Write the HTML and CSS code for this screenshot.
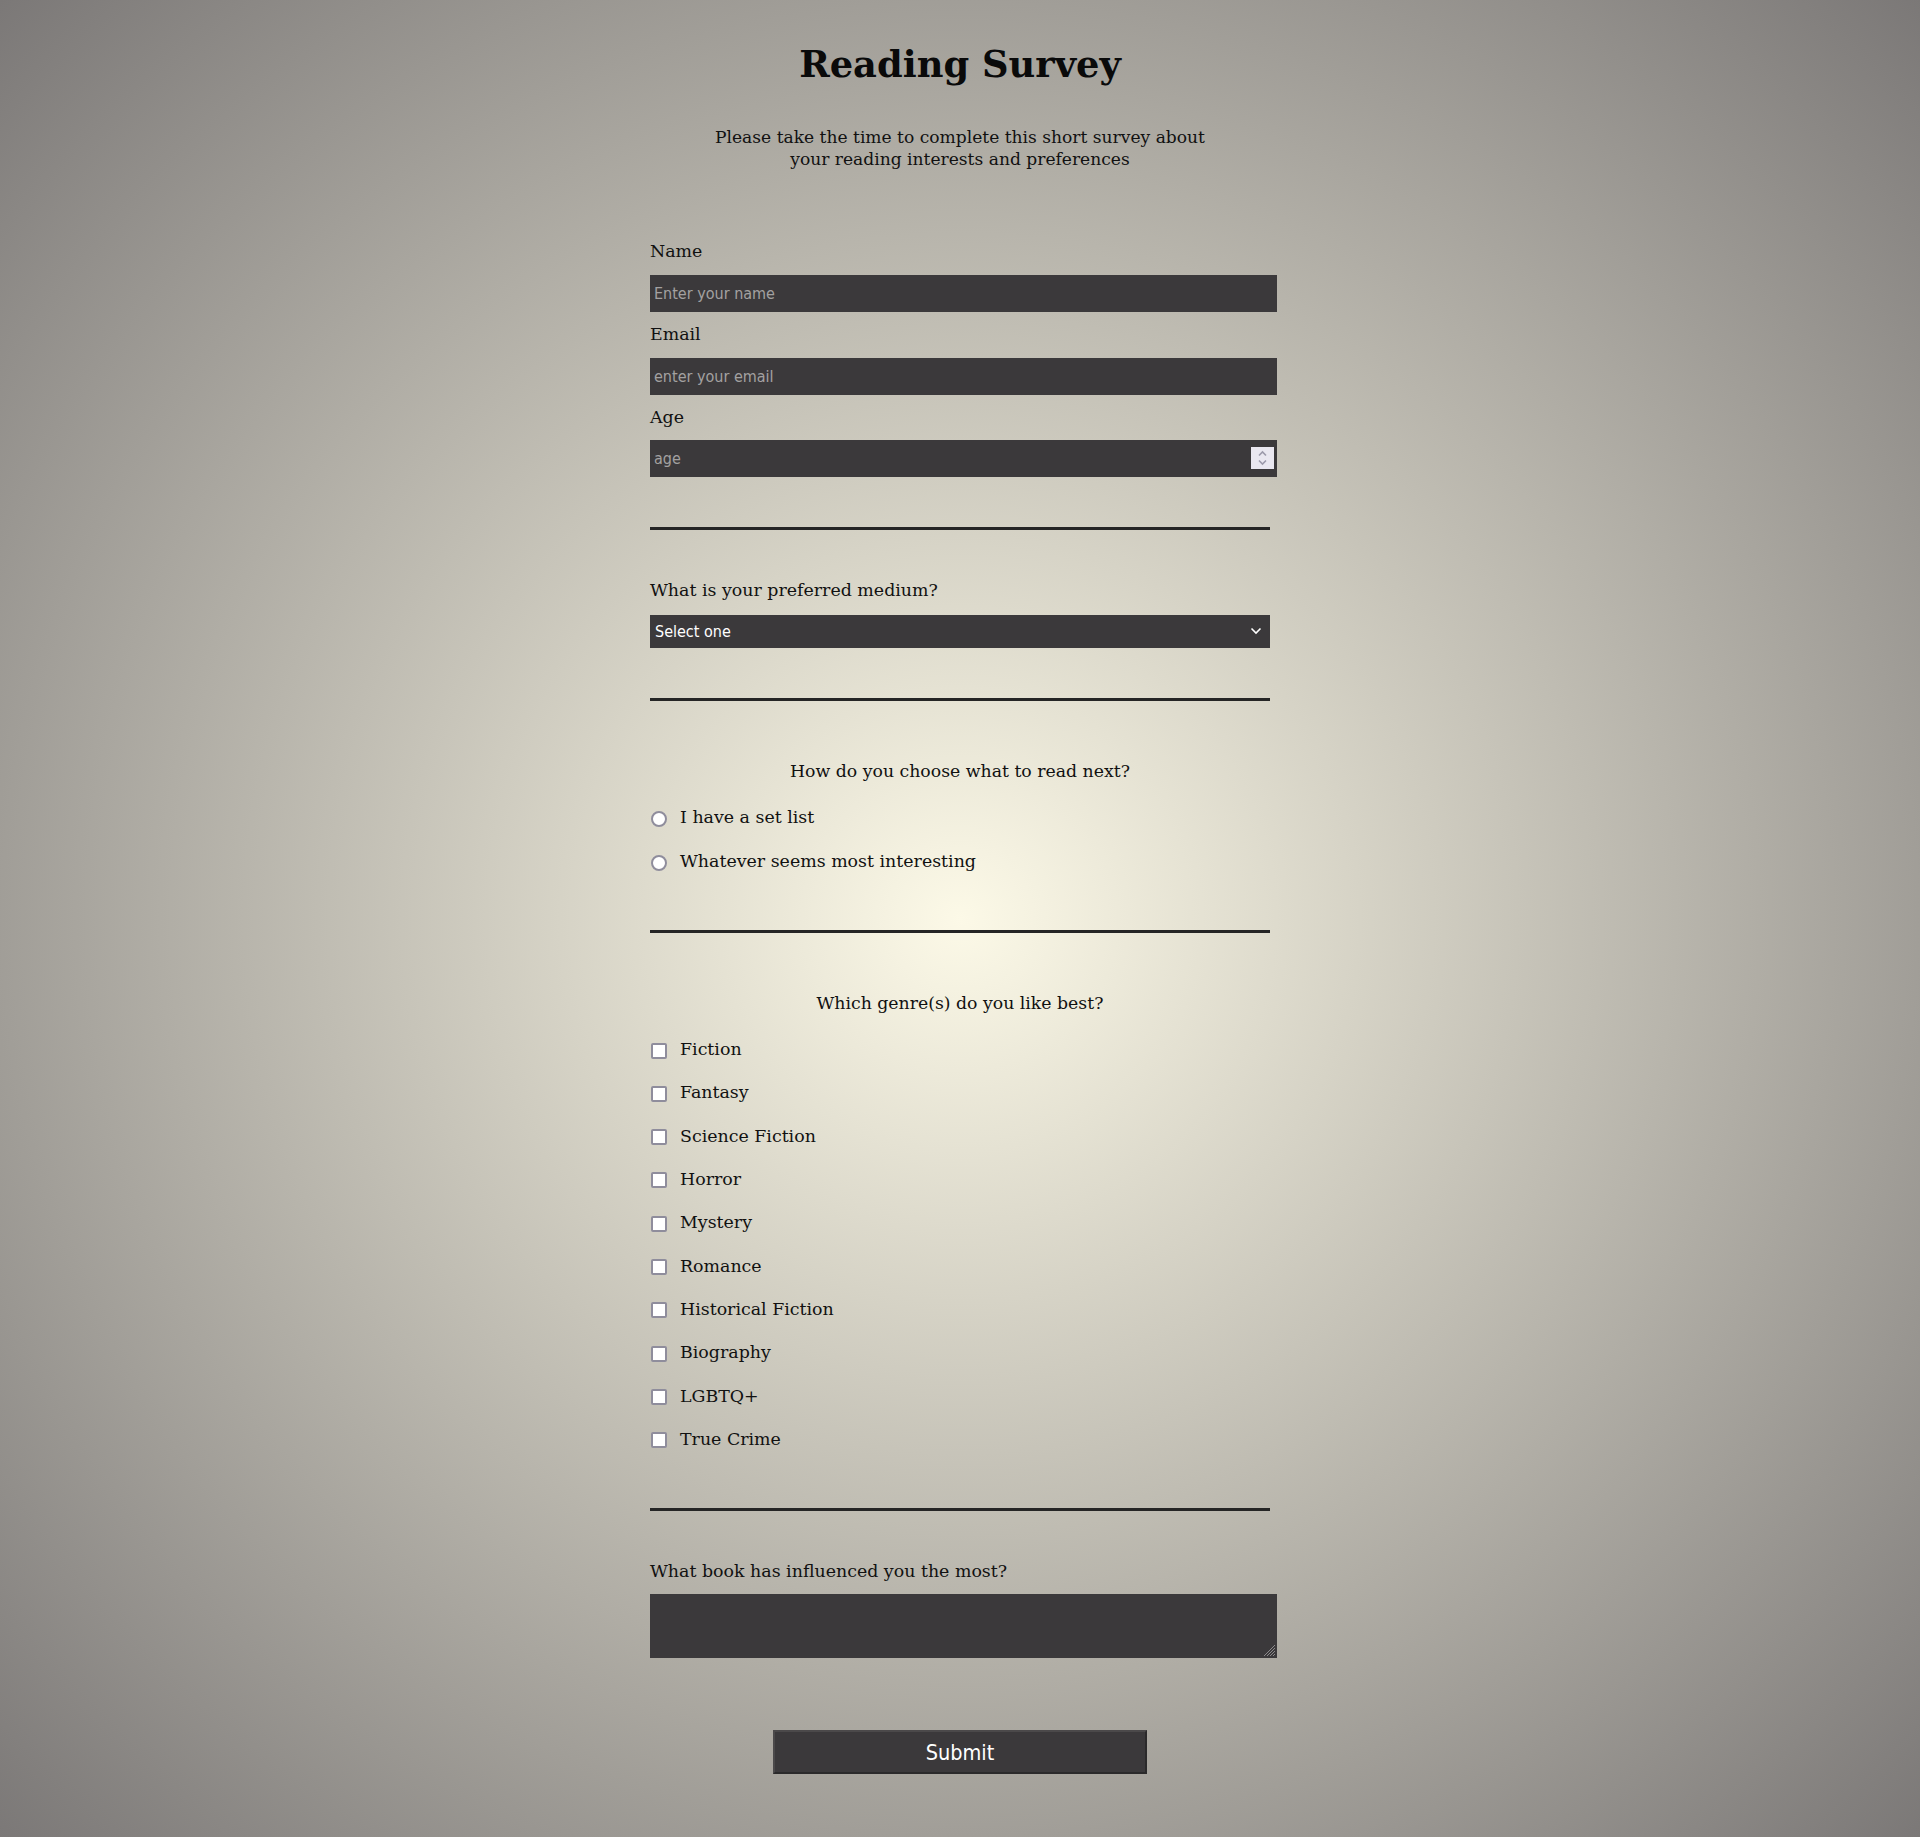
FILE: index.html
```html
<!DOCTYPE html>
<html lang="en">
<head>
<meta charset="utf-8">
<title>Reading Survey</title>
<link rel="stylesheet" href="styles.css">
</head>
<body>
<main class="page">
  <header class="intro">
    <h1 class="title">Reading Survey</h1>
    <p class="subtitle">Please take the time to complete this short survey about<br>your reading interests and preferences</p>
  </header>
  <form class="survey">
    <section class="group group-info">
      <label class="field-label" for="name">Name</label>
      <input class="text-input" id="name" type="text" placeholder="Enter your name">
      <label class="field-label" for="email">Email</label>
      <input class="text-input" id="email" type="email" placeholder="enter your email">
      <label class="field-label" for="age">Age</label>
      <div class="number-wrap">
        <input class="text-input number-input" id="age" type="number" placeholder="age">
        <span class="spinner" aria-hidden="true">
          <svg width="23" height="22" viewBox="0 0 23 22"><path d="M8 8.5 L11.5 5 L15 8.5" fill="none" stroke="#9c9aab" stroke-width="1.6"/><path d="M8 13.5 L11.5 17 L15 13.5" fill="none" stroke="#9c9aab" stroke-width="1.6"/></svg>
        </span>
      </div>
    </section>
    <hr class="divider divider-first">
    <section class="group group-medium">
      <label class="field-label" for="medium">What is your preferred medium?</label>
      <div class="select-wrap">
        <select class="select" id="medium">
          <option>Select one</option>
          <option>Print</option>
          <option>E-book</option>
          <option>Audiobook</option>
        </select>
        <span class="select-arrow" aria-hidden="true">
          <svg width="12" height="8" viewBox="0 0 12 8"><path d="M1.5 1.5 L6 6 L10.5 1.5" fill="none" stroke="#ffffff" stroke-width="1.6"/></svg>
        </span>
      </div>
    </section>
    <hr class="divider">
    <section class="group group-choice">
      <p class="question">How do you choose what to read next?</p>
      <ul class="options options-radio">
        <li class="option"><input class="radio" type="radio" name="choose" id="c1"><label for="c1">I have a set list</label></li>
        <li class="option"><input class="radio" type="radio" name="choose" id="c2"><label for="c2">Whatever seems most interesting</label></li>
      </ul>
    </section>
    <hr class="divider divider-long">
    <section class="group group-choice">
      <p class="question">Which genre(s) do you like best?</p>
      <ul class="options options-check">
        <li class="option"><input class="check" type="checkbox" id="g1"><label for="g1">Fiction</label></li>
        <li class="option"><input class="check" type="checkbox" id="g2"><label for="g2">Fantasy</label></li>
        <li class="option"><input class="check" type="checkbox" id="g3"><label for="g3">Science Fiction</label></li>
        <li class="option"><input class="check" type="checkbox" id="g4"><label for="g4">Horror</label></li>
        <li class="option"><input class="check" type="checkbox" id="g5"><label for="g5">Mystery</label></li>
        <li class="option"><input class="check" type="checkbox" id="g6"><label for="g6">Romance</label></li>
        <li class="option"><input class="check" type="checkbox" id="g7"><label for="g7">Historical Fiction</label></li>
        <li class="option"><input class="check" type="checkbox" id="g8"><label for="g8">Biography</label></li>
        <li class="option"><input class="check" type="checkbox" id="g9"><label for="g9">LGBTQ+</label></li>
        <li class="option"><input class="check" type="checkbox" id="g10"><label for="g10">True Crime</label></li>
      </ul>
    </section>
    <hr class="divider divider-long">
    <section class="group group-book">
      <label class="field-label" for="book">What book has influenced you the most?</label>
      <div class="textarea-wrap">
        <textarea class="textarea" id="book"></textarea>
        <span class="grip" aria-hidden="true">
          <svg width="14" height="14" viewBox="0 0 14 14"><path d="M13 2 L2 13 M13 5 L5 13 M13 8 L8 13 M13 11 L11 13" fill="none" stroke="#8c8a8c" stroke-width="1"/></svg>
        </span>
      </div>
    </section>
    <div class="submit-row">
      <button class="submit" type="submit">Submit</button>
    </div>
  </form>
</main>
</body>
</html>
```
FILE: styles.css
```css
html, body {
  margin: 0;
  padding: 0;
}
body {
  min-height: 1837px;
  background: radial-gradient(ellipse farthest-corner at 50% 50%, #fcf9e7 0%, #7b7877 100%);
  font-family: "DejaVu Serif", "Liberation Serif", serif;
  color: #111;
}
.page {
  width: 620px;
  margin: 0 auto;
  padding-top: 44px;
  padding-bottom: 64px;
}
.intro {
  text-align: center;
}
.title {
  margin: 0;
  font-size: 36.8px;
  line-height: 40px;
  font-weight: bold;
  color: #0a0a0a;
}
.subtitle {
  margin: 42px 0 0;
  font-size: 17.1px;
  line-height: 22px;
}
.survey {
  display: flex;
  flex-direction: column;
  margin-top: 69px;
}
.group {
  display: flex;
  flex-direction: column;
}
.field-label {
  display: block;
  font-size: 17.4px;
  line-height: 24px;
  margin: 0 0 12px;
}
.group-info .field-label + .text-input {
  margin-bottom: 10px;
}
.group-info .number-wrap {
  margin-bottom: 10px;
  margin-top: -1px;
}
.text-input {
  box-sizing: border-box;
  width: 627px;
  height: 37px;
  margin: 0;
  padding: 0 4px;
  border: none;
  background: #3b393b;
  color: #f2f2f2;
  font-family: "DejaVu Sans", "Liberation Sans", sans-serif;
  font-stretch: condensed;
  font-size: 16px;
  outline: none;
}
.text-input::placeholder {
  color: #a3a1a1;
}
.number-wrap {
  position: relative;
  width: 627px;
}
.number-input {
  display: block;
  -moz-appearance: textfield;
}
.number-input::-webkit-inner-spin-button,
.number-input::-webkit-outer-spin-button {
  -webkit-appearance: none;
  margin: 0;
}
.spinner {
  position: absolute;
  right: 3px;
  top: 7px;
  width: 23px;
  height: 22px;
  background: #e9e7f0;
  display: flex;
}
.divider {
  width: 620px;
  margin: 0;
  height: 3px;
  border: none;
  background: #252525;
}
.divider-first {
  margin-top: 40px;
}
.group-medium {
  margin-top: 48px;
}
.group-medium .field-label {
  margin-bottom: 13px;
}
.select-wrap {
  position: relative;
  width: 620px;
  margin-bottom: 50px;
}
.select {
  display: block;
  width: 620px;
  height: 33px;
  margin: 0;
  padding: 0 5px;
  border: none;
  border-radius: 0;
  -webkit-appearance: none;
  appearance: none;
  background: #3b393b;
  color: #ffffff;
  font-family: "DejaVu Sans", "Liberation Sans", sans-serif;
  font-stretch: condensed;
  font-size: 16px;
  outline: none;
}
.select-arrow {
  position: absolute;
  right: 8px;
  top: 12px;
  display: flex;
  pointer-events: none;
}
.group-choice {
  margin-top: 58px;
}
.question {
  margin: 0;
  text-align: center;
  font-size: 17.3px;
  line-height: 24px;
}
.options {
  list-style: none;
  margin: 22px 0 57px;
  padding: 0;
  display: flex;
  flex-direction: column;
}
.options-radio {
  gap: 20px;
}
.options-check {
  gap: 19.33px;
}
.option {
  display: flex;
  align-items: center;
  height: 24px;
  font-size: 17.4px;
}
.option label {
  margin-left: 13px;
  line-height: 24px;
}
.radio,
.check {
  -webkit-appearance: none;
  appearance: none;
  box-sizing: border-box;
  width: 16px;
  height: 16px;
  margin: 3px 0 0 1px;
  background: #ffffff;
  border: 2px solid #8f8d9c;
}
.radio {
  border-radius: 50%;
}
.check {
  border-radius: 2px;
}
.group-book {
  margin-top: 48px;
}
.group-book .field-label {
  margin-bottom: 11px;
}
.textarea-wrap {
  position: relative;
  width: 627px;
}
.textarea {
  box-sizing: border-box;
  display: block;
  width: 627px;
  height: 64px;
  margin: 0;
  border: none;
  background: #3b393b;
  color: #f2f2f2;
  resize: none;
  outline: none;
}
.grip {
  position: absolute;
  right: 1px;
  bottom: 1px;
  display: flex;
  pointer-events: none;
}
.submit-row {
  display: flex;
  justify-content: center;
  margin-top: 72px;
}
.submit {
  width: 374px;
  height: 44px;
  background: #3b393b;
  color: #ffffff;
  border: 2px solid;
  border-color: #4b494a #2b2a2b #2b2a2b #4b494a;
  font-family: "DejaVu Sans", "Liberation Sans", sans-serif;
  font-stretch: condensed;
  font-size: 21.5px;
  padding: 2px 0 0;
}
```
